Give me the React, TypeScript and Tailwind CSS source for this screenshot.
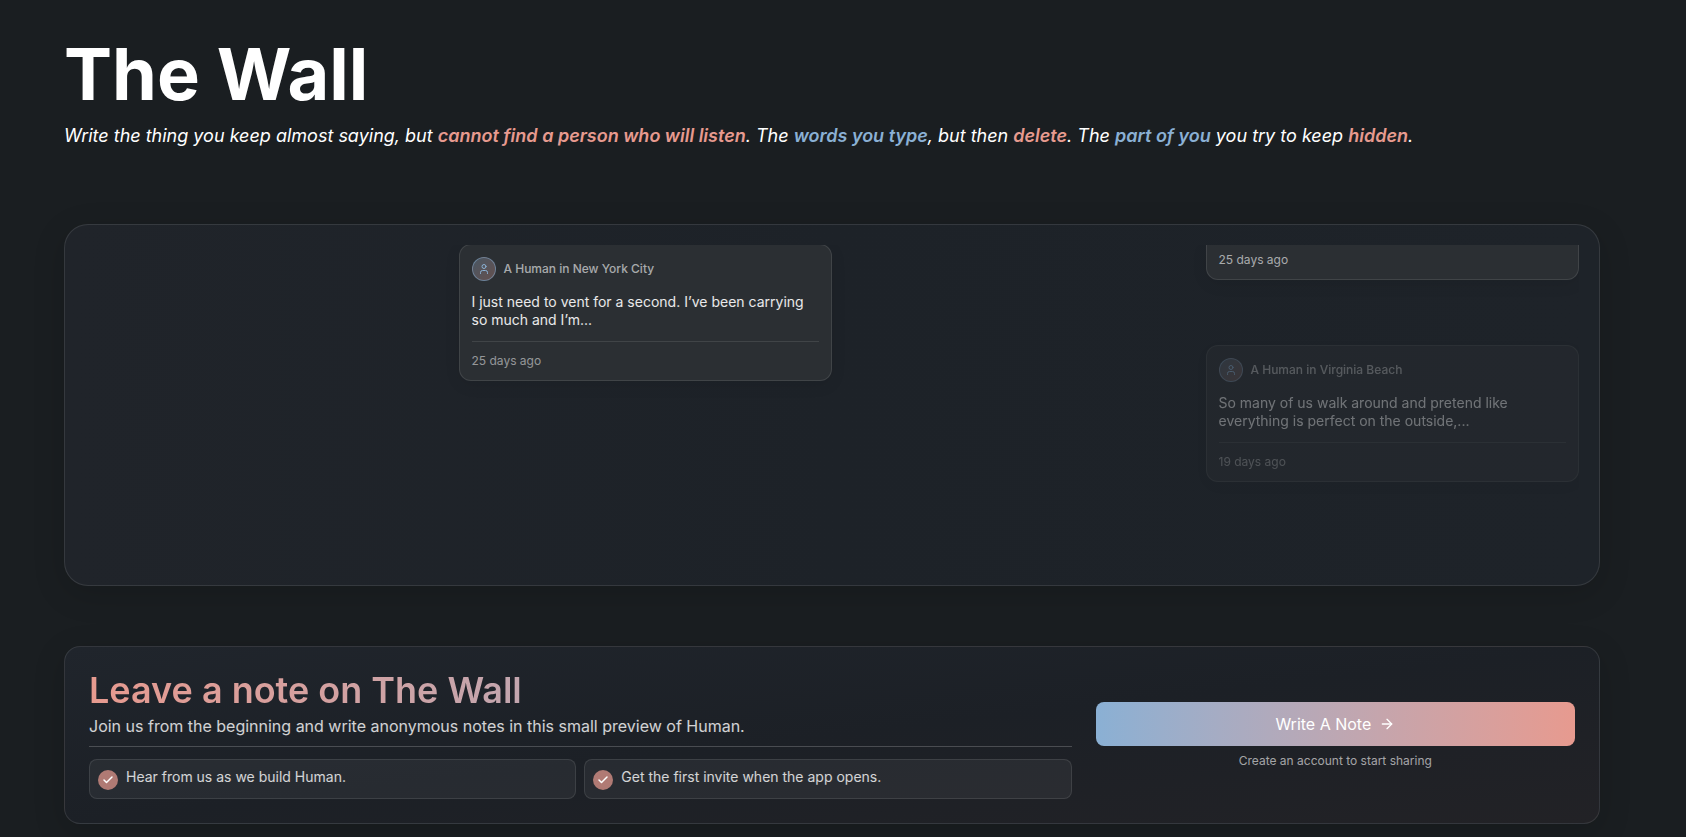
import React from 'react';
import { ArrowRight, Check, User } from 'lucide-react';

interface Note {
  author?: string;
  text?: string;
  age: string;
  faded?: boolean;
}

// A note without author and text has already scrolled past the top edge
const columns: Note[][] = [
  [],
  [
    {
      author: 'A Human in New York City',
      text: 'I just need to vent for a second. I’ve been carrying so much and I’m...',
      age: '25 days ago',
    },
  ],
  [],
  [
    { age: '25 days ago' },
    {
      author: 'A Human in Virginia Beach',
      text: 'So many of us walk around and pretend like everything is perfect on the outside,...',
      age: '19 days ago',
      faded: true,
    },
  ],
];

const perks = ['Hear from us as we build Human.', 'Get the first invite when the app opens.'];

const NoteCard: React.FC<{ note: Note }> = ({ note }) => {
  if (!note.author) {
    return (
      <article className="rounded-b-xl border border-t-0 border-white/10 bg-[#2b2f33] px-3 pt-2 pb-3 shadow-[0_4px_16px_rgba(0,0,0,0.08)]">
        <div className="text-xs leading-[14px] text-white/60">{note.age}</div>
      </article>
    );
  }

  return (
    <article
      className={`rounded-xl border border-white/10 bg-[#2b2f33] p-3 shadow-[0_4px_16px_rgba(0,0,0,0.08)] ${note.faded ? 'opacity-40' : '-mt-px'}`}
    >
      <div className="flex items-center gap-2">
        <div className="flex size-6 items-center justify-center rounded-full border border-[#8ab0d4]/50 bg-linear-to-br from-[#8ab0d4]/30 to-[#e79a8f]/30 text-[#8ab0d4]">
          <User size={12} />
        </div>
        <span className="text-xs font-medium text-white/60">{note.author}</span>
      </div>
      <p className="mt-3 text-sm leading-[18px] text-white/90">{note.text}</p>
      <div className="mt-3 border-t border-white/10 pt-3 text-xs leading-[14px] text-white/50">{note.age}</div>
    </article>
  );
};

export default function App() {
  return (
    <main className="min-h-screen bg-[#1a1e21] pt-[38px] pr-[86px] pb-[13px] pl-16 font-['Inter',sans-serif] text-white">
      <header>
        <h1 className="text-7xl leading-none font-bold">The Wall</h1>
        <p className="mt-3 text-lg leading-7 italic">
          Write the thing you keep almost saying, but{' '}
          <strong className="font-semibold text-[#e79a8f]">cannot find a person who will listen</strong>. The{' '}
          <strong className="font-semibold text-[#8ab0d4]">words you type</strong>, but then{' '}
          <strong className="font-semibold text-[#e79a8f]">delete</strong>. The{' '}
          <strong className="font-semibold text-[#8ab0d4]">part of you</strong> you try to keep{' '}
          <strong className="font-semibold text-[#e79a8f]">hidden</strong>.
        </p>
      </header>

      <section className="mt-[74px] rounded-3xl border border-white/10 bg-linear-to-r from-[#20242a] via-[#1d2228] to-[#1e2329] p-5 shadow-[0_8px_32px_rgba(0,0,0,0.15)]">
        <div className="grid h-80 grid-cols-4 overflow-hidden">
          {columns.map((notes, i) => (
            <div key={i} className="flex flex-col gap-[65px]">
              {notes.map((note, j) => (
                <NoteCard key={j} note={note} />
              ))}
            </div>
          ))}
        </div>
      </section>

      <section className="mt-15 grid grid-cols-[2.05fr_1fr] items-center gap-6 rounded-2xl border border-white/10 bg-linear-to-br from-[#20252c] via-[#1c2026] to-[#222226] p-6 shadow-[0_8px_32px_rgba(0,0,0,0.15)]">
        <div>
          <div className="border-b border-white/20 pb-1.5">
            <h2 className="bg-linear-to-r from-[#e79a8f] to-[#8ab0d4] bg-clip-text text-4xl leading-[38px] font-semibold text-transparent">
              Leave a note on The Wall
            </h2>
            <p className="mt-1 text-base leading-[27px] text-white/80">
              Join us from the beginning and write anonymous notes in this small preview of Human.
            </p>
          </div>
          <ul className="mt-3 grid grid-cols-2 gap-2">
            {perks.map((perk) => (
              <li key={perk} className="flex items-start gap-2 rounded-lg border border-white/10 bg-white/5 p-2">
                <span className="mt-0.5 flex size-5 items-center justify-center rounded-full bg-[#b07a74]">
                  <Check size={12} strokeWidth={3} />
                </span>
                <span className="text-sm leading-[18px] text-white/80">{perk}</span>
              </li>
            ))}
          </ul>
        </div>
        <div className="flex flex-col gap-2 text-center">
          <button
            type="button"
            className="flex h-11 items-center justify-center gap-2 rounded-lg bg-linear-to-r from-[#8ab0d4] to-[#e79a8f] text-base"
          >
            Write A Note
            <ArrowRight size={16} />
          </button>
          <p className="text-xs leading-[14px] text-white/60">Create an account to start sharing</p>
        </div>
      </section>
    </main>
  );
}
